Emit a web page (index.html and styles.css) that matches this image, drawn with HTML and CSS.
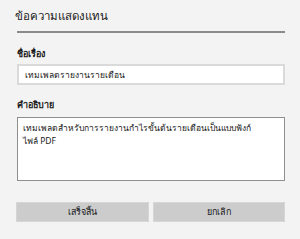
FILE: index.html
```html
<!DOCTYPE html>
<html lang="th">
<head>
    <meta charset="UTF-8">
    <meta name="viewport" content="width=device-width, initial-scale=1.0">
    <title>ข้อความแสดงแทน</title>
    <link rel="stylesheet" href="styles.css">
</head>
<body>
    <div class="pane">
        <!-- Header -->
        <h1 class="pane-title">ข้อความแสดงแทน</h1>
        <div class="pane-rule"></div>

        <!-- Fields -->
        <div class="field-label">ชื่อเรื่อง</div>
        <div class="text-input">เทมเพลตรายงานรายเดือน</div>

        <div class="field-label field-label-gap">คำอธิบาย</div>
        <div class="text-area">เทมเพลตสำหรับการรายงานกำไรขั้นต้นรายเดือนเป็นแบบฟังก์<br>ไฟล์ PDF</div>

        <!-- Actions -->
        <div class="pane-actions">
            <button class="btn">เสร็จสิ้น</button>
            <button class="btn">ยกเลิก</button>
        </div>
    </div>
</body>
</html>
```

FILE: styles.css
```css
* {
    margin: 0;
    padding: 0;
    box-sizing: border-box;
}

body {
    font-family: 'Noto Sans', 'DejaVu Sans', sans-serif;
    background-color: #f3f3f3;
    color: #1a1a1a;
    overflow: hidden;
}

.pane {
    display: flex;
    flex-direction: column;
    padding: 6px 15px 0 16px;
}

.pane-title {
    font-size: 11.5px;
    font-weight: normal;
    line-height: 20px;
    margin-left: -1px;
}

.pane-rule {
    height: 2px;
    margin: 5px 0 0 1px;
    background-color: #8a8a8a;
}

.field-label {
    font-size: 9px;
    font-weight: 600;
    line-height: 14px;
    margin: 14px 0 0 1px;
}

.field-label-gap {
    margin-top: 13px;
}

.text-input {
    height: 21px;
    margin: 3px 0 0 1px;
    padding: 0 6px;
    background-color: #ffffff;
    border: 2px solid #dadada;
    font-size: 8.5px;
    line-height: 17px;
    white-space: nowrap;
}

.text-area {
    height: 64px;
    margin: 5px 0 0 1px;
    padding: 3px 5px;
    background-color: #ffffff;
    border: 1px solid #8f8f8f;
    font-size: 8.5px;
    line-height: 13px;
    white-space: nowrap;
    overflow: hidden;
}

.pane-actions {
    display: flex;
    gap: 4px;
    margin-top: 21px;
}

.btn {
    flex: 1;
    height: 20px;
    border: 1px solid #d6d6d6;
    background-color: #cccccc;
    color: #1a1a1a;
    font-family: inherit;
    font-size: 9px;
    cursor: pointer;
}
```
